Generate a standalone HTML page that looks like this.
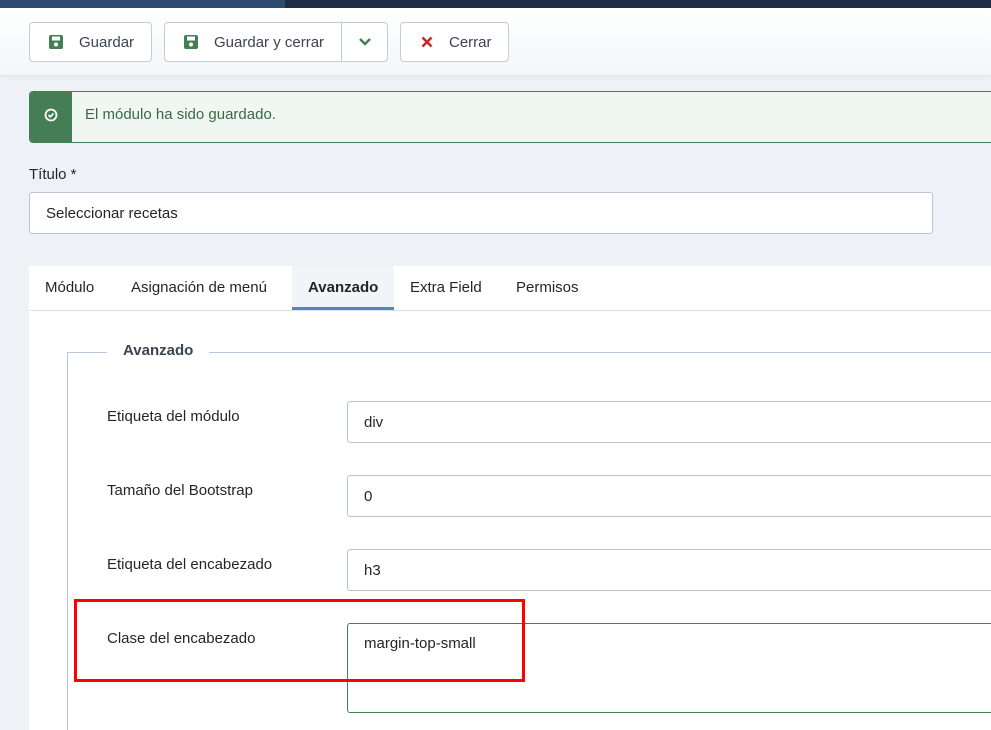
<!DOCTYPE html>
<html><head><meta charset="utf-8"><style>
*{box-sizing:border-box;margin:0;padding:0}
html,body{width:991px;height:730px;overflow:hidden}
body{background:#eef2f6;font-family:"Liberation Sans",sans-serif;position:relative;color:#22262a}
.a{position:absolute}
.btn{position:absolute;top:22px;height:40px;border:1px solid #c4ccd6;border-radius:4px;background:#fff;font-size:15px;color:#3b4450;display:flex;align-items:center}
.inp{position:absolute;background:#fff;border:1px solid #b8c4d4;border-radius:3px;font-size:15px;padding-left:16px;display:flex;align-items:center;color:#22262a}
.lbl{position:absolute;left:107px;font-size:15px;color:#22262a}
.tab{position:absolute;top:266px;height:44px;line-height:43px;font-size:15px;color:#22262a}
</style></head><body>
<div class="a" style="left:0;top:0;width:285px;height:8px;background:#2e4a6e"></div>
<div class="a" style="left:285px;top:0;width:706px;height:8px;background:#1f2d47"></div>
<div class="a" style="left:0;top:8px;width:991px;height:67px;background:linear-gradient(#fff,#f4f6f9);box-shadow:0 2px 4px rgba(0,0,0,.06)"></div>
<div class="btn" style="left:29px;width:123px"><svg style="margin-left:19px" width="14" height="14" viewBox="0 0 14 14"><rect x="0" y="0" width="14" height="14" rx="2" fill="#457d54"/><rect x="3" y="1.5" width="8" height="4" fill="#fff"/><circle cx="7" cy="9.5" r="2" fill="#fff"/></svg><span style="margin-left:16px">Guardar</span></div>
<div class="btn" style="left:164px;width:224px"><svg style="margin-left:19px" width="14" height="14" viewBox="0 0 14 14"><rect x="0" y="0" width="14" height="14" rx="2" fill="#457d54"/><rect x="3" y="1.5" width="8" height="4" fill="#fff"/><circle cx="7" cy="9.5" r="2" fill="#fff"/></svg><span style="margin-left:16px">Guardar y cerrar</span><div class="a" style="left:176px;top:0;width:1px;height:38px;background:#c4ccd6"></div><svg class="a" style="left:193px;top:14px" width="14" height="10" viewBox="0 0 14 10"><path d="M2 2l5 5 5-5" stroke="#457d54" stroke-width="2.4" fill="none"/></svg></div>
<div class="btn" style="left:400px;width:109px"><svg style="margin-left:20px" width="12" height="12" viewBox="0 0 12 12"><path d="M1.5 1.5l9 9M10.5 1.5l-9 9" stroke="#c52827" stroke-width="2.6"/></svg><span style="margin-left:16px">Cerrar</span></div>
<div class="a" style="left:29px;top:91px;width:970px;height:52px;background:#f0f6f1;border:1px solid #457d54;border-radius:4px;overflow:hidden">
<div class="a" style="left:0;top:0;width:42px;height:52px;background:#457d54"></div>
<svg class="a" style="left:14px;top:16px" width="14" height="14" viewBox="0 0 14 14"><circle cx="7" cy="7" r="5.5" stroke="#fff" stroke-width="1.8" fill="none"/><path d="M4.5 7l1.8 1.8 3.2-3.4" stroke="#fff" stroke-width="1.7" fill="none"/></svg>
<div class="a" style="left:55px;top:14px;font-size:15px;color:#3a6a47">El módulo ha sido guardado.</div></div>
<div class="a" style="left:29px;top:166px;font-size:15px">Título *</div>
<div class="inp" style="left:29px;top:192px;width:904px;height:42px">Seleccionar recetas</div>
<div class="a" style="left:29px;top:266px;width:962px;height:464px;background:#fff"></div>
<div class="a" style="left:29px;top:310px;width:962px;height:1px;background:#dbe2ea"></div>
<div class="a" style="left:292px;top:266px;width:102px;height:44px;background:#f2f5f8"></div>
<div class="a" style="left:292px;top:307px;width:102px;height:3px;background:#5584c3"></div>
<div class="tab" style="left:45px">Módulo</div>
<div class="tab" style="left:131px">Asignación de menú</div>
<div class="tab" style="left:308px;font-weight:bold">Avanzado</div>
<div class="tab" style="left:410px">Extra Field</div>
<div class="tab" style="left:516px">Permisos</div>
<div class="a" style="left:67px;top:352px;width:930px;height:378px;border:1px solid #b8c8dc;border-bottom:none"></div>
<div class="a" style="left:107px;top:342px;padding:0 16px;background:#fff;font-size:15px;font-weight:bold;color:#3b4450">Avanzado</div>
<div class="lbl" style="top:408px">Etiqueta del módulo</div>
<div class="inp" style="left:347px;top:401px;width:660px;height:42px">div</div>
<div class="lbl" style="top:482px">Tamaño del Bootstrap</div>
<div class="inp" style="left:347px;top:475px;width:660px;height:42px">0</div>
<div class="lbl" style="top:556px">Etiqueta del encabezado</div>
<div class="inp" style="left:347px;top:549px;width:660px;height:42px">h3</div>
<div class="lbl" style="top:630px">Clase del encabezado</div>
<div class="a" style="left:347px;top:623px;width:660px;height:90px;border:1px solid #457d54;border-radius:3px;font-size:15px;padding:11px 0 0 16px">margin-top-small</div>
<div class="a" style="left:74px;top:599px;width:451px;height:83px;border:3px solid #f00"></div>
</body></html>
